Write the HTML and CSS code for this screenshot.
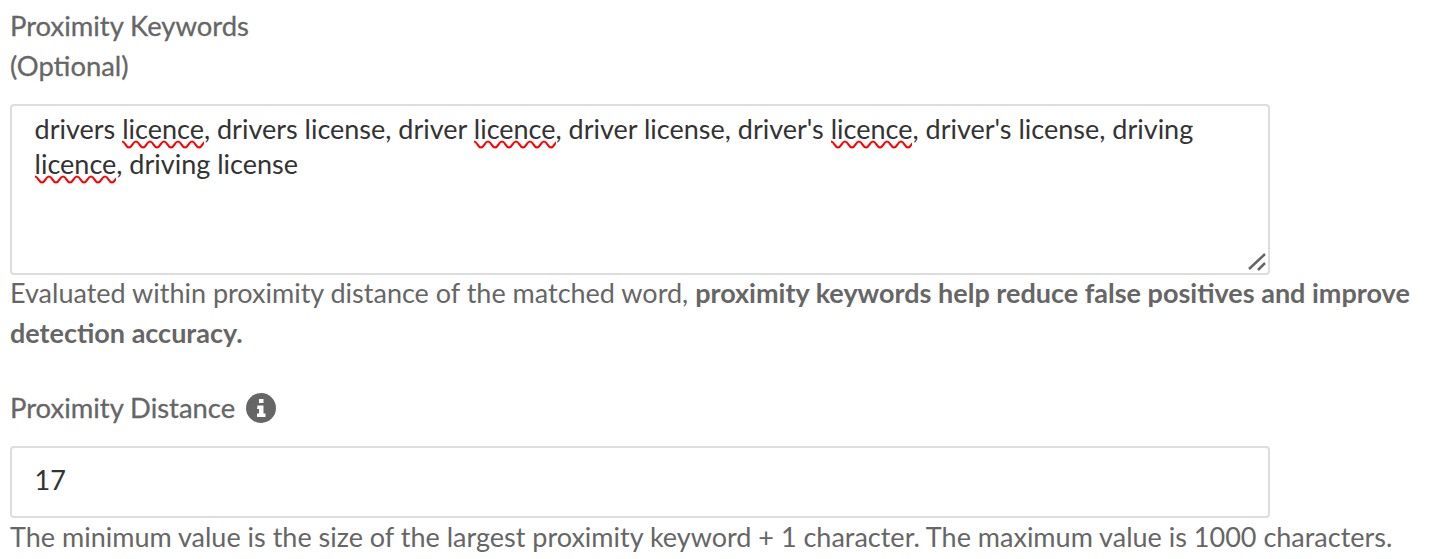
FILE: index.html
```html
<!DOCTYPE html>
<html lang="en">
<head>
    <meta charset="UTF-8">
    <meta name="viewport" content="width=device-width, initial-scale=1.0">
    <title>Proximity Keywords</title>
    <link rel="stylesheet" href="styles.css">
</head>
<body>
    <div class="form">
        <div class="field-label">Proximity Keywords<br>(Optional)</div>
        <div class="text-box keywords">
            drivers <span class="spell">licence</span>, drivers license, driver <span class="spell">licence</span>, driver license, driver's <span class="spell">licence</span>, driver's license, driving <span class="spell">licence</span>, driving license
            <svg class="resize-handle" width="20" height="20" viewBox="0 0 20 20">
                <path d="M1 16L17 1M10 17L17 10" stroke="#666" stroke-width="2.500" fill="none"/>
            </svg>
        </div>
        <div class="help-text">Evaluated within proximity distance of the matched word, <b>proximity keywords help reduce false positives and improve detection accuracy.</b></div>

        <div class="field-label distance-label">
            Proximity Distance
            <svg class="info-icon" width="30" height="30" viewBox="0 0 30 30">
                <circle cx="15" cy="15" r="15" fill="#666"/>
                <path d="M13 6h4.500v4H13zM11.500 12.500h6v8h2v3.500h-8.500v-3.500h2v-4.500h-2z" fill="#fff"/>
            </svg>
        </div>
        <div class="text-box distance">17</div>
        <div class="help-text">The minimum value is the size of the largest proximity keyword + 1 character. The maximum value is 1000 characters.</div>
    </div>
</body>
</html>
```

FILE: styles.css
```css
body{
    margin: 0;
    font-family: 'Lato', sans-serif;
    font-size: 27px;
    color: #666;
    background: #fff;
}
.form{
    padding: 6px 10px 0 10px;
}
.field-label{
    font-size: 27.4px;
    line-height: 40px;
    -webkit-text-stroke: 0.3px #666;
    margin-bottom: 18px;
}
.distance-label{
    display: flex;
    align-items: center;
    gap: 11px;
    margin-top: 35px;
    margin-bottom: 18px;
}
.text-box{
    position: relative;
    box-sizing: border-box;
    width: 1260px;
    border: 2px solid #ddd;
    border-radius: 4px;
    padding: 5px 22.6px;
    line-height: 35px;
    color: #333;
}
.keywords{
    height: 171px;
    margin-bottom: -2px;
}
.distance{
    height: 72px;
    padding-top: 14px;
    margin-bottom: -1px;
}
.spell{
    padding-bottom: 4px;
    background: url("data:image/svg+xml,%3Csvg xmlns='http://www.w3.org/2000/svg' width='14' height='9'%3E%3Cpath d='M0 1.500C3.500 1.500 3.500 7.500 7 7.500S10.500 1.500 14 1.500' stroke='%23f00' stroke-width='2.200' fill='none'/%3E%3C/svg%3E") repeat-x left bottom;
}
.resize-handle{
    position: absolute;
    right: 0;
    bottom: 0;
}
.info-icon{
    display: block;
}
.help-text{
    line-height: 40px;
}
```
